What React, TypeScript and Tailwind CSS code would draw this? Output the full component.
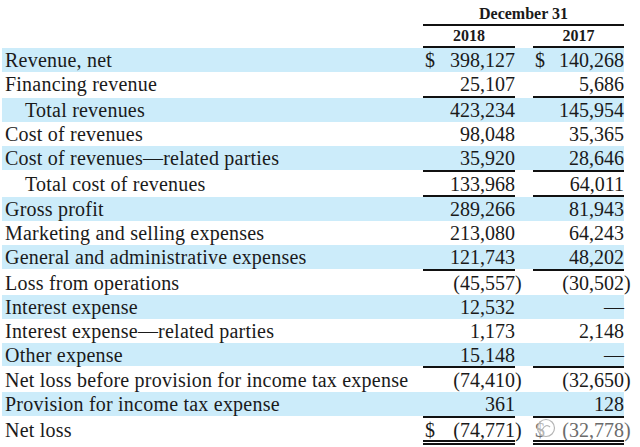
import React from "react";

type Row = {
  label: string;
  indent?: boolean;
  blue?: boolean;
  a: string;
  b: string;
  aParen?: boolean;
  bParen?: boolean;
  dollar?: boolean;
  rule?: boolean;
  h?: string;
};

const rows: Row[] = [
  { label: "Revenue, net", blue: true, a: "398,127", b: "140,268", dollar: true },
  { label: "Financing revenue", a: "25,107", b: "5,686", rule: true },
  { label: "Total revenues", indent: true, blue: true, a: "423,234", b: "145,954" },
  { label: "Cost of revenues", a: "98,048", b: "35,365" },
  { label: "Cost of revenues\u2014related parties", blue: true, a: "35,920", b: "28,646", rule: true },
  { label: "Total cost of revenues", indent: true, a: "133,968", b: "64,011", rule: true, h: "h-[23px]" },
  { label: "Gross profit", blue: true, a: "289,266", b: "81,943" },
  { label: "Marketing and selling expenses", a: "213,080", b: "64,243" },
  { label: "General and administrative expenses", blue: true, a: "121,743", b: "48,202", rule: true },
  { label: "Loss from operations", a: "(45,557", b: "(30,502", aParen: true, bParen: true },
  { label: "Interest expense", blue: true, a: "12,532", b: "\u2014" },
  { label: "Interest expense\u2014related parties", a: "1,173", b: "2,148" },
  { label: "Other expense", blue: true, a: "15,148", b: "\u2014", rule: true, h: "h-[23px]" },
  { label: "Net loss before provision for income tax expense", a: "(74,410", b: "(32,650", aParen: true, bParen: true },
  { label: "Provision for income tax expense", blue: true, a: "361", b: "128", rule: true },
];

function Cell({ value, paren, dollar, width, muted }: { value: string; paren?: boolean; dollar?: boolean; width: string; muted?: boolean }) {
  return (
    <div className={`${width} flex justify-between whitespace-nowrap pl-[2px] ${muted ? "text-[#6b6b6b]" : ""}`}>
      <span>{dollar ? "$" : ""}</span>
      <span>
        {value}
        {paren ? <span className="inline-block w-0">)</span> : null}
      </span>
    </div>
  );
}

function Rule() {
  return (
    <div className="flex h-[2px]">
      <div className="flex-1" />
      <div className="w-[92px] bg-[#111]" />
      <div className="w-[18px]" />
      <div className="w-[91px] bg-[#111]" />
    </div>
  );
}

export default function App() {
  return (
    <div className="relative w-[640px] h-[447px] overflow-hidden bg-white font-['Liberation_Serif','Times_New_Roman',serif] text-[#1a1a1a]">
      <div className="ml-[2px] w-[622px]">
        {/* Header */}
        <div className="flex h-[24px] pt-[5px] text-[16px] leading-[18px] font-bold">
          <div className="flex-1" />
          <div className="w-[201px] text-center">December 31</div>
        </div>
        <div className="flex h-[2px]">
          <div className="flex-1" />
          <div className="w-[201px] bg-[#111]" />
        </div>
        <div className="flex h-[20px] pt-[1px] text-[16px] leading-[18px] font-bold">
          <div className="flex-1" />
          <div className="w-[92px] text-center">2018</div>
          <div className="w-[18px]" />
          <div className="w-[91px] text-center">2017</div>
        </div>
        <Rule />

        {/* Body */}
        <div className="text-[20px] leading-6">
          {rows.map((r, i) => (
            <React.Fragment key={i}>
              <div className={`flex ${r.h ?? "h-6"} ${r.blue ? "bg-[#ccecfa]" : ""}`}>
                <div className={`flex-1 whitespace-nowrap tracking-[0.22px] ${r.indent ? "pl-[23px]" : "pl-[3px]"}`}>{r.label}</div>
                <Cell value={r.a} paren={r.aParen} dollar={r.dollar} width="w-[92px]" />
                <div className="w-[18px]" />
                <Cell value={r.b} paren={r.bParen} dollar={r.dollar} width="w-[91px]" />
              </div>
              {r.rule ? <Rule /> : null}
            </React.Fragment>
          ))}
          <div className="flex h-[22px]">
            <div className="flex-1 whitespace-nowrap tracking-[0.22px] pl-[3px]">Net loss</div>
            <Cell value="(74,771" paren dollar width="w-[92px]" />
            <div className="w-[18px]" />
            <Cell value="(32,778" paren dollar width="w-[91px]" muted />
          </div>
          <div className="flex h-[5px]">
            <div className="flex-1" />
            <div className="w-[92px] border-y-2 border-[#111]" />
            <div className="w-[18px]" />
            <div className="w-[91px] border-y-2 border-[#111]" />
          </div>
        </div>
      </div>

      {/* watermark */}
      <svg className="absolute left-[536px] top-[418px]" width="20" height="20" viewBox="0 0 20 20">
        <circle cx="10" cy="10" r="8.5" fill="rgba(255,255,255,0.5)" stroke="#b5b5b5" strokeWidth="1.2" />
        <path d="M6 12 Q10 5 14 9" fill="none" stroke="#b5b5b5" strokeWidth="1.2" />
      </svg>
    </div>
  );
}
